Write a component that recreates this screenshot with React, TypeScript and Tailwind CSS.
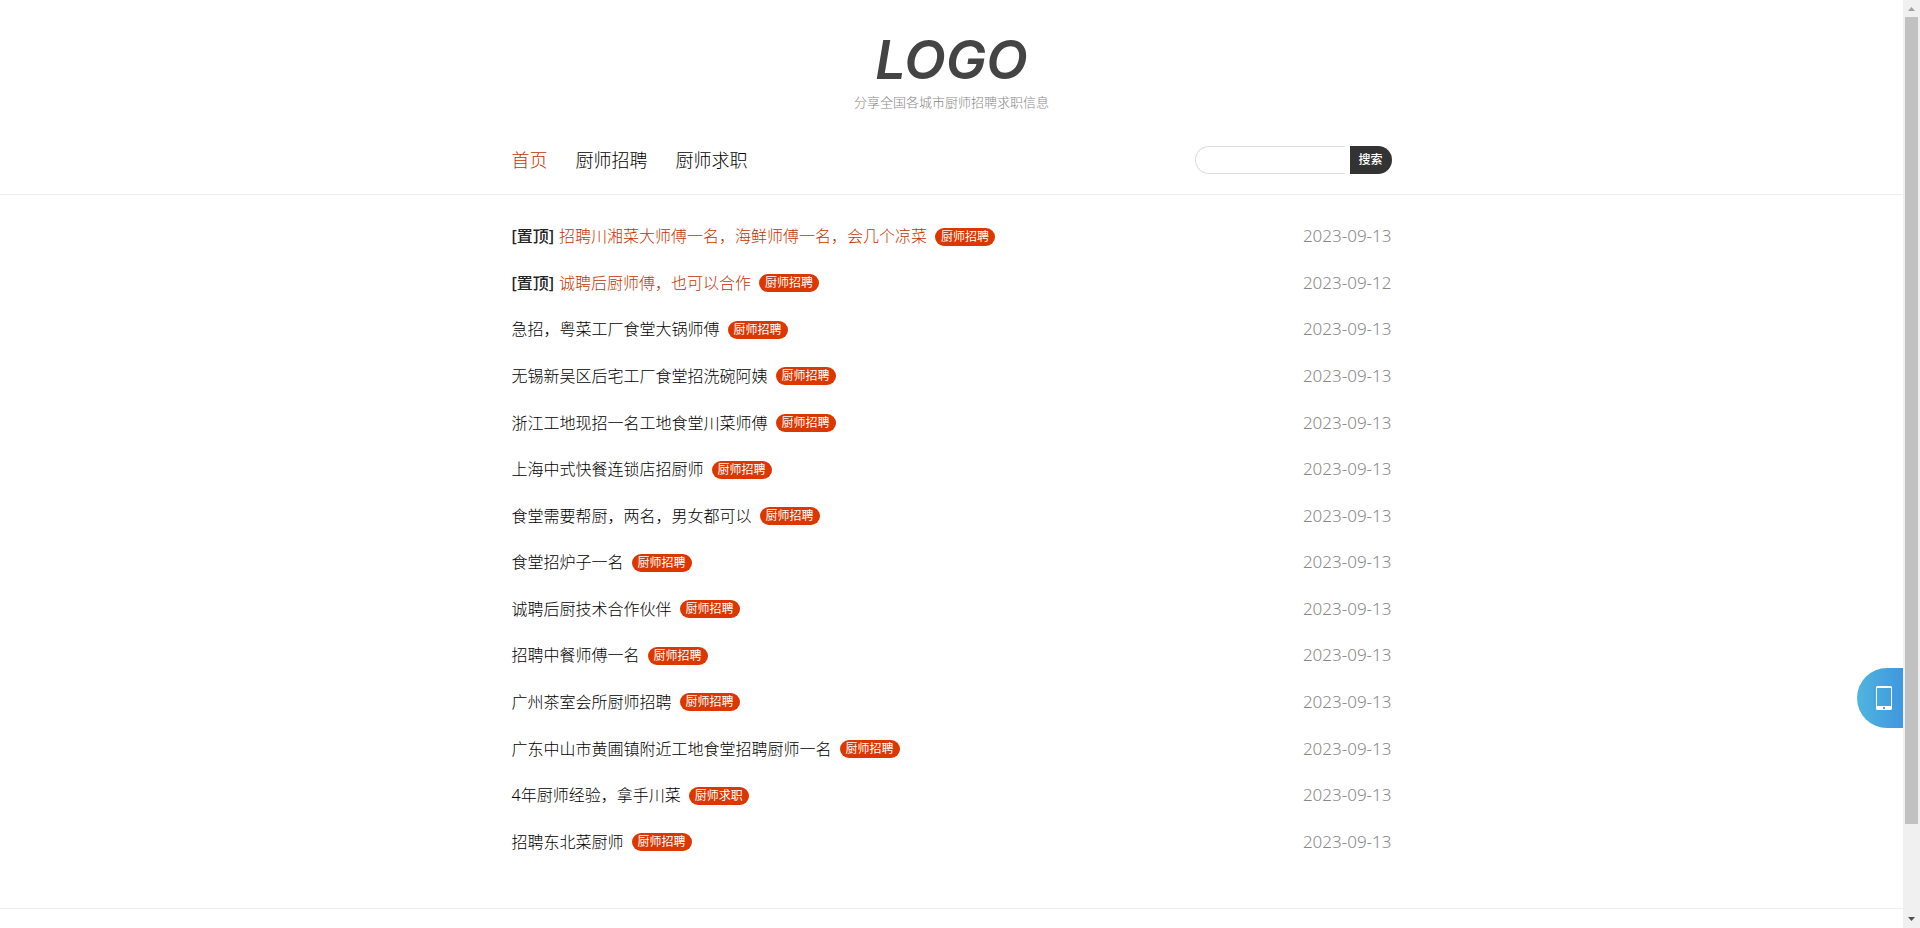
type Post = { title: string; tag: string; date: string; pinned?: boolean };

const posts: Post[] = [
  { title: "招聘川湘菜大师傅一名，海鲜师傅一名，会几个凉菜", tag: "厨师招聘", date: "2023-09-13", pinned: true },
  { title: "诚聘后厨师傅，也可以合作", tag: "厨师招聘", date: "2023-09-12", pinned: true },
  { title: "急招，粤菜工厂食堂大锅师傅", tag: "厨师招聘", date: "2023-09-13" },
  { title: "无锡新吴区后宅工厂食堂招洗碗阿姨", tag: "厨师招聘", date: "2023-09-13" },
  { title: "浙江工地现招一名工地食堂川菜师傅", tag: "厨师招聘", date: "2023-09-13" },
  { title: "上海中式快餐连锁店招厨师", tag: "厨师招聘", date: "2023-09-13" },
  { title: "食堂需要帮厨，两名，男女都可以", tag: "厨师招聘", date: "2023-09-13" },
  { title: "食堂招炉子一名", tag: "厨师招聘", date: "2023-09-13" },
  { title: "诚聘后厨技术合作伙伴", tag: "厨师招聘", date: "2023-09-13" },
  { title: "招聘中餐师傅一名", tag: "厨师招聘", date: "2023-09-13" },
  { title: "广州茶室会所厨师招聘", tag: "厨师招聘", date: "2023-09-13" },
  { title: "广东中山市黄圃镇附近工地食堂招聘厨师一名", tag: "厨师招聘", date: "2023-09-13" },
  { title: "4年厨师经验，拿手川菜", tag: "厨师求职", date: "2023-09-13" },
  { title: "招聘东北菜厨师", tag: "厨师招聘", date: "2023-09-13" },
];

const navItems = ["首页", "厨师招聘", "厨师求职"];

function Header() {
  return (
    <header className="border-b border-[#eee] pt-7 pb-5">
      <div className="flex flex-col items-center">
        <a href="#" className="font-['Inter','Open_Sans',sans-serif] text-[54px] leading-[64px] font-semibold text-[#444] italic">
          LOGO
        </a>
        <p className="text-[13px] leading-5 text-[#888]">分享全国各城市厨师招聘求职信息</p>
      </div>
      <div className="mx-auto mt-[34px] flex max-w-[880px] items-center justify-between">
        <nav className="flex gap-7 text-lg leading-7">
          {navItems.map((item, i) => (
            <a key={item} href="#" className={i === 0 ? "text-[#c43300]" : "text-black"}>
              {item}
            </a>
          ))}
        </nav>
        <form className="flex gap-[5px]" onSubmit={(e) => e.preventDefault()}>
          <input
            type="text"
            aria-label="搜索"
            className="h-7 w-[150px] rounded-l-full border border-r-0 border-[#ddd] bg-white px-3 text-xs outline-none"
          />
          <button type="submit" className="h-7 w-[42px] rounded-r-full bg-[#333] text-xs font-medium text-white">
            搜索
          </button>
        </form>
      </div>
    </header>
  );
}

function PostRow({ post }: { post: Post }) {
  return (
    <li className="flex items-center justify-between">
      <div className="flex items-center">
        {post.pinned && <strong className="mr-[5px] font-medium text-[#222]">[置顶]</strong>}
        <a href="#" className={post.pinned ? "text-[#c43300]" : "text-black"}>
          {post.title}
        </a>
        <a href="#" className="mt-px ml-2 rounded-full bg-[#dd3700] px-1.5 text-xs leading-[18px] font-normal text-white">
          {post.tag}
        </a>
      </div>
      <time className="text-[17px] leading-6 text-[#888]">{post.date}</time>
    </li>
  );
}

function PhoneTab() {
  return (
    <button
      type="button"
      aria-label="手机版"
      className="absolute top-[668px] right-0 flex h-[60px] w-[46px] items-center justify-center rounded-l-full bg-linear-to-r from-[#50b5df] to-[#3f97de] pl-2"
    >
      <svg width="16" height="24" viewBox="0 0 16 24" fill="none">
        <path fillRule="evenodd" fill="#fff" d="M1.500 0h13A1.500 1.500 0 0 1 16 1.500v21a1.500 1.500 0 0 1-1.500 1.500h-13A1.500 1.500 0 0 1 0 22.500v-21A1.500 1.500 0 0 1 1.500 0zM1 2v18h14V2zM7 21v2h2v-2z" />
      </svg>
    </button>
  );
}

function ScrollTrack() {
  return (
    <div aria-hidden="true" className="flex h-screen w-[17px] shrink-0 flex-col items-center bg-[#f0f0f0]">
      <svg width="17" height="17" viewBox="0 0 17 17">
        <path d="M5 11h7L8.500 7z" fill="#a0a0a0" />
      </svg>
      <div className="flex w-full flex-1 flex-col px-0.5">
        <div className="h-[90.3%] bg-[#c1c1c1]" />
      </div>
      <svg width="17" height="17" viewBox="0 0 17 17">
        <path d="M5 6h7L8.500 10z" fill="#505050" />
      </svg>
    </div>
  );
}

export default function App() {
  return (
    <div className="flex min-h-screen bg-white font-['Noto_Sans','Noto_Sans_CJK_SC',sans-serif] font-light">
      <div className="relative min-w-0 flex-1">
        <Header />
        <main className="mx-auto max-w-[880px] pt-[18px] pb-[43px]">
          <ul className="grid min-h-[652px] auto-rows-fr">
            {posts.map((post) => (
              <PostRow key={post.title} post={post} />
            ))}
          </ul>
        </main>
        <footer className="border-t border-[#eee]" />
        <PhoneTab />
      </div>
      <ScrollTrack />
    </div>
  );
}
